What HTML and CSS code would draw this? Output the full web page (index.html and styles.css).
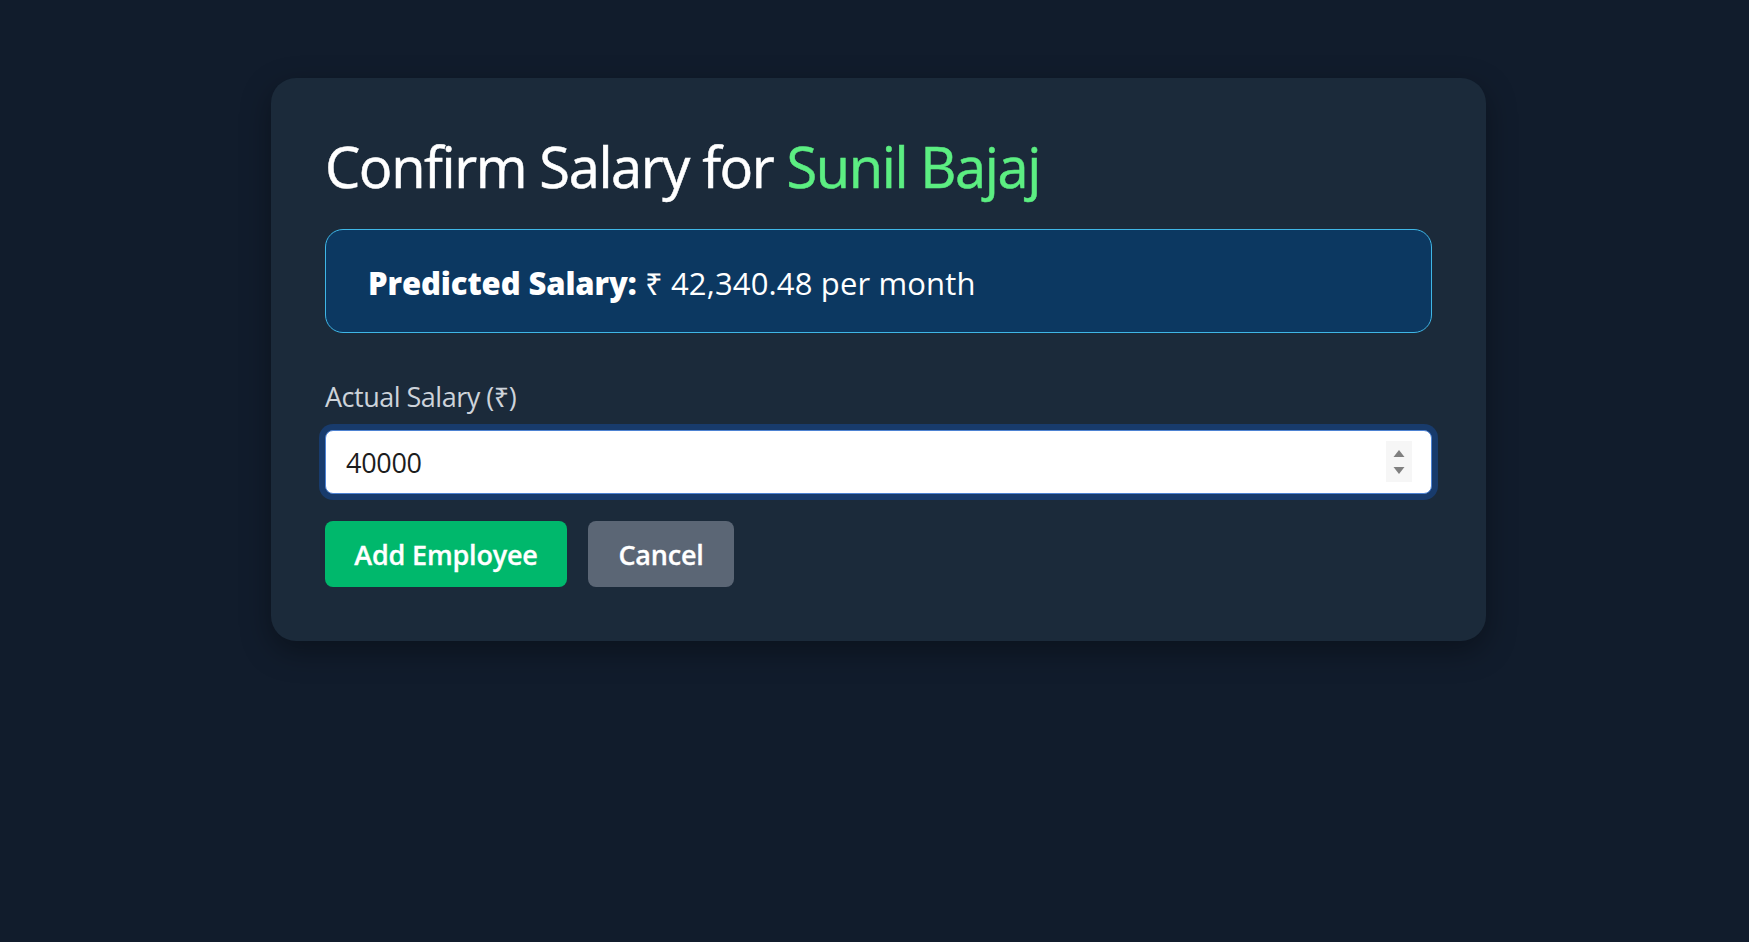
FILE: index.html
```html
<!DOCTYPE html>
<html lang="en">
<head>
<meta charset="utf-8">
<title>Confirm Salary</title>
<link rel="stylesheet" href="styles.css">
</head>
<body>
<main class="page">
  <section class="card">
    <h2 class="title">Confirm Salary for <span class="name">Sunil Bajaj</span></h2>
    <div class="predicted">
      <strong class="predicted-label">Predicted Salary:</strong> ₹ 42,340.48 per month
    </div>
    <label class="field-label" for="actual">Actual Salary (₹)</label>
    <div class="input-wrap">
      <input class="input" id="actual" type="number" value="40000">
      <span class="spinner" aria-hidden="true">
        <svg width="14" height="34" viewBox="0 0 14 34">
          <path d="M7 5 L12.5 12 L1.5 12 Z" fill="#808080"/>
          <path d="M1.5 22 L12.5 22 L7 29 Z" fill="#808080"/>
        </svg>
      </span>
    </div>
    <div class="actions">
      <button class="btn btn-primary" type="button">Add Employee</button>
      <button class="btn btn-secondary" type="button">Cancel</button>
    </div>
  </section>
</main>
</body>
</html>
```

FILE: styles.css
```css
* { box-sizing: border-box; }

html, body {
  margin: 0;
  padding: 0;
  background: #111c2c;
  height: 100%;
}

body {
  font-family: "Open Sans", "Noto Sans", sans-serif;
  color: #ffffff;
}

.page {
  display: flex;
  justify-content: center;
  padding: 78px 0 0 8px;
}

.card {
  width: 1215px;
  background: #1b2a3a;
  border-radius: 25px;
  padding: 54px;
  box-shadow: 0 10px 30px rgba(0, 0, 0, 0.35);
}

.title {
  margin: 0 0 29px;
  font-size: 56px;
  line-height: 68px;
  font-weight: 400;
  letter-spacing: -1.4px;
  color: #ffffff;
  -webkit-text-stroke: 0.5px #ffffff;
}

.name {
  color: #5cee82;
  -webkit-text-stroke: 0.5px #5cee82;
}

.predicted {
  background: #0c3861;
  border: 1px solid #3fb6e6;
  border-radius: 18px;
  padding: 30px 42px 26px;
  font-size: 31px;
  line-height: 46px;
  letter-spacing: 0.15px;
  white-space: nowrap;
}

.predicted-label {
  font-weight: 800;
  letter-spacing: -0.1px;
}

.field-label {
  display: block;
  margin: 43px 0 12px;
  font-size: 27px;
  line-height: 42px;
  color: #cdd3da;
  letter-spacing: -0.5px;
}

.input-wrap {
  position: relative;
}

.input {
  display: block;
  width: 100%;
  height: 64px;
  padding: 0 20px;
  border: 1px solid #4d82d2;
  border-radius: 8px;
  background: #ffffff;
  box-shadow: 0 0 0 6px #183b6c;
  font-family: "Open Sans", "Noto Sans", sans-serif;
  font-size: 27px;
  color: #1c1c1c;
  outline: none;
  -moz-appearance: textfield;
  letter-spacing: -0.3px;
}

.input::-webkit-outer-spin-button,
.input::-webkit-inner-spin-button {
  -webkit-appearance: none;
  margin: 0;
}

.spinner {
  position: absolute;
  right: 20px;
  top: 11px;
  width: 26px;
  height: 41px;
  background: #f6f6f6;
  display: flex;
  align-items: center;
  justify-content: center;
}

.actions {
  display: flex;
  gap: 21px;
  margin-top: 27px;
}

.btn {
  height: 66px;
  border: none;
  border-radius: 8px;
  padding: 0;
  font-family: "Open Sans", "Noto Sans", sans-serif;
  font-size: 27px;
  font-weight: 600;
  color: #ffffff;
  white-space: nowrap;
  text-align: center;
  letter-spacing: -0.2px;
  -webkit-text-stroke: 0.3px #ffffff;
}

.btn-primary { background: #00b86c; width: 242px; }
.btn-secondary { background: #5b6675; width: 146px; }
```
